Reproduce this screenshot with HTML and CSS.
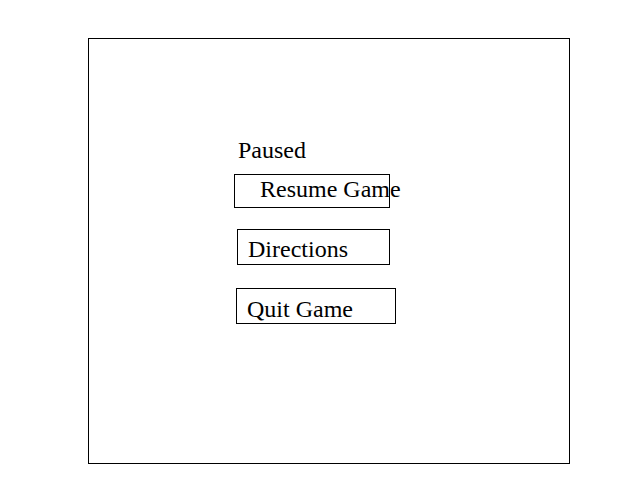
FILE: index.html
```html
<!DOCTYPE html>
<html>
<head>
<meta charset="utf-8">
<link rel="stylesheet" href="styles.css">
</head>
<body>
<div class="frame">
  <div class="menu">
    <div class="title">Paused</div>
    <div class="btn btn-resume">Resume Game</div>
    <div class="btn btn-directions">Directions</div>
    <div class="btn btn-quit">Quit Game</div>
  </div>
</div>
</body>
</html>
```
FILE: styles.css
```css
html, body {
  margin: 0;
  padding: 0;
  background: #fff;
}
body {
  font-family: "Liberation Serif", "Times New Roman", serif;
  font-size: 24px;
  line-height: 28px;
  color: #000;
}
.frame {
  box-sizing: border-box;
  margin-left: 88px;
  margin-top: 38px;
  width: 482px;
  height: 426px;
  border: 1px solid #000;
}
.menu {
  display: flex;
  flex-direction: column;
  align-items: flex-start;
  padding-top: 97px;
}
.title {
  margin-left: 149px;
  height: 28px;
}
.btn {
  box-sizing: border-box;
  border: 1px solid #000;
  white-space: nowrap;
}
.btn-resume {
  margin-top: 10px;
  margin-left: 145px;
  width: 156px;
  height: 34px;
  padding-left: 25px;
}
.btn-directions {
  margin-top: 21px;
  margin-left: 148px;
  width: 153px;
  height: 36px;
  padding-top: 5px;
  padding-left: 10px;
}
.btn-quit {
  margin-top: 23px;
  margin-left: 147px;
  width: 160px;
  height: 36px;
  padding-top: 6px;
  padding-left: 10px;
}
```
